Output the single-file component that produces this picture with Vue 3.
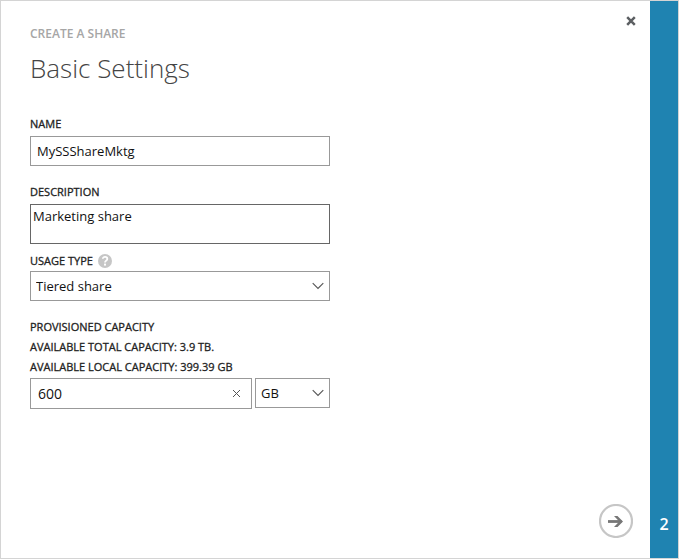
<script setup>
import { ref } from 'vue'

const name = ref('MySSShareMktg')
const description = ref('Marketing share')
const usage = ref('Tiered share')
const capacity = ref('600')
const unit = ref('GB')
</script>

<template>
  <main class="wizard">
    <form class="page" @submit.prevent>
      <button class="icon-button close" type="button" aria-label="Close">
        <svg width="10" height="10" viewBox="0 0 10 10" aria-hidden="true">
          <path d="M1.2 1.2 8.8 8.8M8.800 1.200 1.200 8.800" fill="none" stroke="#5c5f62" stroke-width="2.5" />
        </svg>
      </button>

      <header class="heading">
        <p class="eyebrow">CREATE A SHARE</p>
        <h1 class="title">Basic Settings</h1>
      </header>

      <div class="fields">
        <div class="field">
          <label class="label" for="share-name">NAME</label>
          <input id="share-name" v-model="name" class="control" type="text" />
        </div>

        <div class="field">
          <label class="label" for="share-description">DESCRIPTION</label>
          <textarea id="share-description" v-model="description" class="control description"></textarea>
        </div>

        <div class="field usage">
          <div class="label-row">
            <label class="label" for="usage-type">USAGE TYPE</label>
            <button class="icon-button" type="button" aria-label="Help">
              <svg width="14" height="14" viewBox="0 0 14 14" aria-hidden="true">
                <circle cx="7" cy="7" r="7" fill="#c6c6c6" />
                <path d="M4.8 4.8C4.8 2.3 9.300 2.300 9.300 4.900C9.300 6.600 7 6.700 7 8.500" fill="none" stroke="#fff" stroke-width="1.8" />
                <rect x="6" y="9.600" width="2" height="2" fill="#fff" />
              </svg>
            </button>
          </div>
          <div class="select-box">
            <select id="usage-type" v-model="usage" class="control">
              <option>Tiered share</option>
            </select>
            <svg class="chevron" width="12" height="8" viewBox="0 0 12 8" aria-hidden="true">
              <path d="M.7 1.2 6 6.5 11.3 1.2" fill="none" stroke="#555" stroke-width="1.1" />
            </svg>
          </div>
        </div>

        <div class="field capacity">
          <label class="label" for="capacity">PROVISIONED CAPACITY</label>
          <p class="label">AVAILABLE TOTAL CAPACITY: 3.9 TB.</p>
          <p class="label">AVAILABLE LOCAL CAPACITY: 399.39 GB</p>
          <div class="capacity-row">
            <div class="capacity-box">
              <input id="capacity" v-model="capacity" class="capacity-input" type="text" />
              <button class="icon-button" type="button" aria-label="Clear" @click="capacity = ''">
                <svg width="9" height="9" viewBox="0 0 9 9" aria-hidden="true">
                  <path d="M1 1 8 8M8 1 1 8" fill="none" stroke="#555" stroke-width="1" />
                </svg>
              </button>
            </div>
            <div class="select-box unit">
              <select v-model="unit" class="control" aria-label="Capacity unit">
                <option>GB</option>
              </select>
              <svg class="chevron" width="12" height="8" viewBox="0 0 12 8" aria-hidden="true">
                <path d="M.7 1.2 6 6.5 11.3 1.2" fill="none" stroke="#555" stroke-width="1.1" />
              </svg>
            </div>
          </div>
        </div>
      </div>

      <button class="icon-button next" type="submit" aria-label="Next">
        <svg width="34" height="34" viewBox="0 0 34 34" aria-hidden="true">
          <circle cx="17" cy="17" r="16" fill="#fff" stroke="#c6c6c6" stroke-width="2.2" />
          <path d="M9 17.500H22.500" fill="none" stroke="#777" stroke-width="2.800" />
          <path d="M15 12H18.500L24 17.500 18.500 23H15L20.300 17.500Z" fill="#777" />
        </svg>
      </button>
    </form>
    <aside class="step">2</aside>
  </main>
</template>

<style>
body {
  margin: 0;
}
</style>

<style scoped>
.wizard {
  display: flex;
  box-sizing: border-box;
  min-height: 100vh;
  border: 1px solid #d4d4d4;
  background: #fff;
  color: #222;
  font-family: "Open Sans", "Noto Sans", sans-serif;
  font-size: 13px;
}

.wizard * {
  box-sizing: border-box;
}

.page {
  position: relative;
  display: flex;
  flex: 1;
  flex-direction: column;
  padding: 24px 17px 20px 29px;
}

.icon-button {
  display: flex;
  padding: 0;
  border: 0;
  background: none;
  cursor: pointer;
}

.close {
  position: absolute;
  top: 15px;
  right: 14px;
}

.heading {
  margin-bottom: 26px;
}

.eyebrow {
  margin: 0;
  color: #a6a6a6;
  font-size: 12px;
  font-weight: 600;
  line-height: 18px;
}

.title {
  margin: 5px 0 0;
  color: #444;
  font-size: 26px;
  font-weight: 300;
  line-height: 40px;
}

.fields {
  display: flex;
  flex-direction: column;
  gap: 16px;
  width: 100%;
  max-width: 300px;
}

.field {
  display: flex;
  flex-direction: column;
  gap: 2px;
}

.label {
  margin: 0;
  color: #222;
  font-size: 11px;
  font-weight: 400;
  line-height: 20px;
  -webkit-text-stroke: 0.3px #222;
}

.label-row {
  display: flex;
  align-items: center;
  gap: 5px;
}

.control {
  display: block;
  width: 100%;
  height: 30px;
  margin: 0;
  padding: 0 6px;
  border: 1px solid #999;
  border-radius: 0;
  background: #fff;
  color: #111;
  font: inherit;
  appearance: none;
}

.description {
  height: 40px;
  padding: 2px;
  border-color: #666;
  line-height: 18px;
  resize: none;
}

.usage {
  gap: 0;
  margin-top: -9px;
}

.select-box {
  display: grid;
  align-items: center;
}

.select-box > * {
  grid-area: 1 / 1;
}

.select-box .control {
  padding: 0 5px;
}

.chevron {
  justify-self: end;
  margin-right: 6px;
  pointer-events: none;
}

.capacity {
  gap: 0;
}

.capacity-row {
  display: flex;
  align-items: flex-start;
  gap: 3px;
  margin-top: 1px;
}

.capacity-box {
  display: flex;
  flex: 1;
  align-items: center;
  height: 31px;
  padding: 0 10px 0 7px;
  border: 1px solid #999;
}

.capacity-input {
  flex: 1;
  min-width: 0;
  padding: 0;
  border: 0;
  background: none;
  color: #111;
  font: inherit;
  font-size: 14px;
}

.unit {
  width: 75px;
}

.next {
  align-self: flex-end;
  margin-top: auto;
}

.step {
  display: flex;
  align-items: flex-end;
  justify-content: center;
  width: 28px;
  padding-bottom: 23px;
  background: #1f83b1;
  color: #fff;
  font-size: 16px;
  font-weight: 600;
}
</style>
